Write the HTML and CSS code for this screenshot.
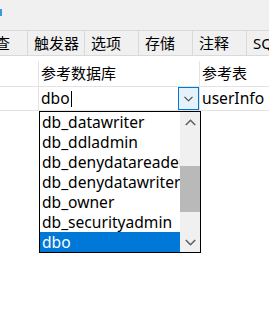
FILE: index.html
```html
<!DOCTYPE html>
<html lang="zh-CN">
  <head>
    <meta charset="UTF-8" />
    <title>外键</title>
    <link rel="stylesheet" href="styles.css">
  </head>
  <body>
    <div class="top-bar"><span class="cut-label"></span></div>

    <div class="tabs">
      <div class="tab first">检查</div>
      <div class="tab">触发器</div>
      <div class="tab">选项</div>
      <div class="tab">存储</div>
      <div class="tab">注释</div>
      <div class="tab">SQL 预览</div>
    </div>

    <div class="grid">
      <div class="row head">
        <div class="cell col-1"></div>
        <div class="cell col-2">参考数据库</div>
        <div class="cell col-3">参考表</div>
      </div>
      <div class="row data">
        <div class="cell col-1"></div>
        <div class="cell col-2 combo">
          <span class="value">dbo<span class="caret"></span></span>
          <span class="drop-btn">
            <svg width="9" height="6" viewBox="0 0 9 6"><polyline points="0.5,0.8 4.5,4.8 8.5,0.8" fill="none" stroke="#404040" stroke-width="1.1"/></svg>
          </span>
        </div>
        <div class="cell col-3">userInfo</div>
      </div>
    </div>

    <div class="popup">
      <ul class="options">
        <li>db_datawriter</li>
        <li>db_ddladmin</li>
        <li>db_denydatareader</li>
        <li>db_denydatawriter</li>
        <li>db_owner</li>
        <li>db_securityadmin</li>
        <li class="selected">dbo</li>
      </ul>
      <div class="scrollbar">
        <span class="arrow">
          <svg width="11" height="7" viewBox="0 0 11 7"><polyline points="0.8,6 5.5,1.3 10.2,6" fill="none" stroke="#606060" stroke-width="1.6"/></svg>
        </span>
        <div class="track"><div class="thumb"></div></div>
        <span class="arrow">
          <svg width="11" height="7" viewBox="0 0 11 7"><polyline points="0.8,1 5.5,5.7 10.2,1" fill="none" stroke="#606060" stroke-width="1.6"/></svg>
        </span>
      </div>
    </div>
  </body>
</html>
```

FILE: styles.css
```css
body {
  margin: 0;
  width: 269px;
  height: 311px;
  overflow: hidden;
  position: relative;
  background-color: #ffffff;
  color: #000000;
  font-family: "Noto Sans", "Noto Sans CJK SC", sans-serif;
  font-size: 15px;
}

.top-bar {
  height: 30px;
  background-color: #f0f0f0;
}

.cut-label {
  display: inline-block;
  margin-top: 8px;
  width: 2px;
  height: 7px;
  background-color: #3a9ad9;
}

.tabs {
  display: flex;
  height: 24px;
  background-color: #f0f0f0;
  border-top: 1px solid #d9d9d9;
  border-bottom: 1px solid #d9d9d9;
  white-space: nowrap;
}

.tab {
  flex: none;
  box-sizing: border-box;
  min-width: 54px;
  padding: 0 5px 0 6px;
  line-height: 24px;
  border-right: 1px solid #d9d9d9;
}

.tab.first {
  margin-left: -26px;
}

.grid {
  padding-top: 5px;
}

.row {
  display: flex;
  border-bottom: 1px solid #e3e3e3;
}

.row.head {
  height: 25px;
  line-height: 25px;
}

.row.data {
  height: 23px;
  line-height: 23px;
  font-size: 15.6px;
}

.cell {
  box-sizing: border-box;
  padding-left: 2px;
  white-space: nowrap;
}

.col-1 {
  width: 39px;
  border-right: 1px solid #e3e3e3;
}

.col-2 {
  width: 161px;
  border-right: 1px solid #e3e3e3;
}

.col-3 {
  flex: 1;
}

.combo {
  display: flex;
  justify-content: space-between;
  padding-right: 0;
}

.value {
  display: flex;
  align-items: center;
}

.caret {
  display: inline-block;
  width: 1px;
  height: 16px;
  margin-left: 1px;
  background-color: #000000;
}

.drop-btn {
  box-sizing: border-box;
  width: 21px;
  height: 23px;
  border: 1px solid #0078d7;
  background-color: #e5f1fb;
  display: flex;
  align-items: center;
  justify-content: center;
}

.popup {
  position: absolute;
  left: 39px;
  top: 111px;
  width: 160px;
  height: 140px;
  border: 1px solid #000000;
  background-color: #ffffff;
  display: flex;
  font-size: 15.6px;
}

.options {
  list-style: none;
  margin: 0;
  padding: 0;
  flex: 1;
  overflow: hidden;
}

.options li {
  height: 20px;
  line-height: 20px;
  padding-left: 2px;
  white-space: nowrap;
  overflow: hidden;
}

.options li.selected {
  background-color: #0078d7;
  color: #ffffff;
}

.scrollbar {
  width: 20px;
  background-color: #f0f0f0;
  display: flex;
  flex-direction: column;
}

.arrow {
  height: 20px;
  display: flex;
  align-items: center;
  justify-content: center;
}

.track {
  flex: 1;
  padding-top: 34px;
}

.thumb {
  height: 46px;
  background-color: #b9b9b9;
}
```
